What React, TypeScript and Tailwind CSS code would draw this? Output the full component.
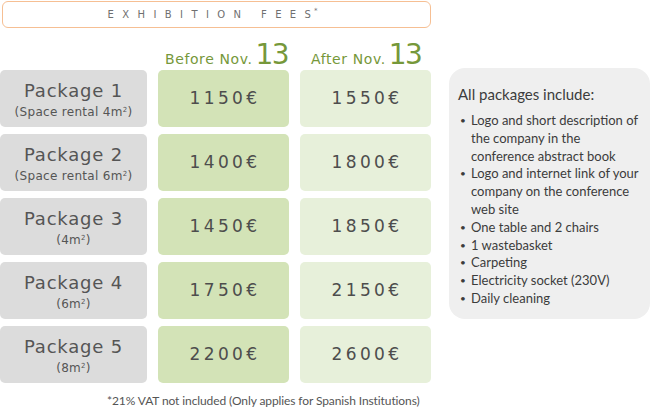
const packages = [
  { name: "Package 1", note: "Space rental 4m", before: "1150€", after: "1550€" },
  { name: "Package 2", note: "Space rental 6m", before: "1400€", after: "1800€" },
  { name: "Package 3", note: "4m", before: "1450€", after: "1850€" },
  { name: "Package 4", note: "6m", before: "1750€", after: "2150€" },
  { name: "Package 5", note: "8m", before: "2200€", after: "2600€" },
];

// each item as its printed lines
const includes = [
  ["Logo and short description of", "the company in the", "conference abstract book"],
  ["Logo and internet link of your", "company on the conference", "web site"],
  ["One table and 2 chairs"],
  ["1 wastebasket"],
  ["Carpeting"],
  ["Electricity socket (230V)"],
  ["Daily cleaning"],
];

export default function App() {
  return (
    <div className="flex h-[407px] w-[650px] overflow-hidden bg-white">
      <div className="w-[431px] shrink-0 pt-[1px] font-['DejaVu_Sans',sans-serif]">
        <div className="ml-[2px] flex h-[27px] w-[429px] items-center justify-center rounded-[6px] border border-[#f6bf93] pr-[8px] text-[10px] text-[#6f6f6f]">
          <span className="tracking-[8.4px]">EXHIBITION FEE</span>
          <span>S</span>
          <span className="ml-[3px] -mt-[6px] text-[7px]">*</span>
        </div>

        <div className="grid h-[42px] grid-cols-[147px_131px_131px] items-end gap-x-[11px] text-[#76983a]">
          <div />
          <div className="flex items-baseline whitespace-nowrap pb-[4px] pl-[7px]">
            <span className="shrink-0 text-[14px] leading-none tracking-[0.6px]">Before Nov.</span>
            <span className="ml-[3px] shrink-0 text-[28px] leading-[22px] tracking-[-1.5px]">13</span>
          </div>
          <div className="flex items-baseline whitespace-nowrap pb-[4px] pl-[11px]">
            <span className="shrink-0 text-[14px] leading-none tracking-[0.6px]">After Nov.</span>
            <span className="ml-[3px] shrink-0 text-[28px] leading-[22px] tracking-[-1.5px]">13</span>
          </div>
        </div>

        <div className="flex flex-col gap-[7px]">
          {packages.map((p) => (
            <div key={p.name} className="grid h-[57px] grid-cols-[147px_131px_131px] gap-x-[11px]">
              <div className="flex flex-col items-center justify-center rounded-[5px] bg-[#dcdcdc] text-[#555]">
                <div className="text-[18px] leading-[26px] tracking-[0.8px]">{p.name}</div>
                <div className="text-[12px] leading-[16px] tracking-[0.3px]">
                  ({p.note}
                  <sup className="text-[7px]">2</sup>)
                </div>
              </div>
              <div className="flex items-center justify-center rounded-[5px] bg-[#d3e3b7] pl-[3px] text-[17px] tracking-[3.4px] text-[#4d4d4d]">
                {p.before}
              </div>
              <div className="flex items-center justify-center rounded-[5px] bg-[#e7f0da] pl-[3px] text-[17px] tracking-[3.4px] text-[#4d4d4d]">
                {p.after}
              </div>
            </div>
          ))}
        </div>

        <div className="pl-[107px] pt-[9px] font-[Lato,sans-serif] text-[12px] tracking-[-0.1px] text-[#555]">
          *21% VAT not included (Only applies for Spanish Institutions)
        </div>
      </div>

      <div className="ml-[18px] mt-[68px] h-[251px] w-[205px] rounded-[16px] bg-[#efefef] pl-[9px] pt-[16px] font-[Lato,sans-serif] text-[#3c3c3c]">
        <div className="text-[15px] leading-[20px]">All packages include:</div>
        <ul className="mt-[8px] text-[13px] leading-[17.8px]">
          {includes.map((lines) => (
            <li key={lines[0]} className="flex">
              <span className="w-[13px] shrink-0 pl-[2px] text-[10px]">•</span>
              <div className="flex flex-col whitespace-nowrap">
                {lines.map((line) => (
                  <div key={line}>{line}</div>
                ))}
              </div>
            </li>
          ))}
        </ul>
      </div>
    </div>
  );
}
